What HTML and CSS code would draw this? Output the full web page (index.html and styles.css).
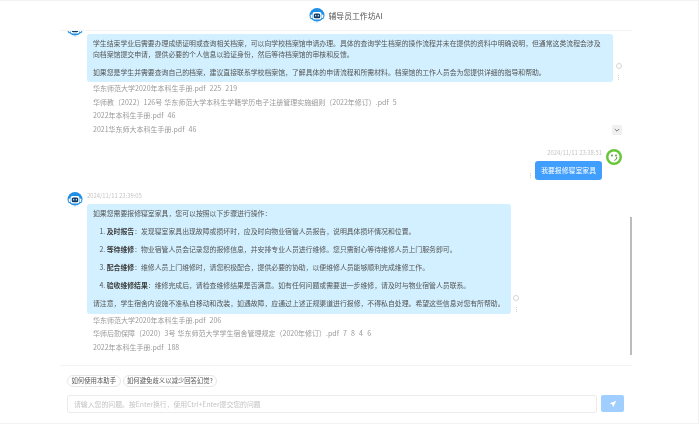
FILE: index.html
```html
<!DOCTYPE html>
<html lang="zh">
<head>
<meta charset="utf-8">
<title>辅导员工作坊AI</title>
<link rel="stylesheet" href="styles.css">
</head>
<body>
<svg class="defs" width="0" height="0" aria-hidden="true">
  <symbol id="bot" viewBox="0 0 32 32">
    <circle cx="16" cy="15" r="15" fill="#1f8fe6"/>
    <path d="M3 21 Q16 33 29 21 L29 27 Q16 34 3 27Z" fill="#fff"/>
    <rect x="3.5" y="13" width="3" height="7" rx="1.5" fill="#fff"/>
    <rect x="25.5" y="13" width="3" height="7" rx="1.5" fill="#fff"/>
    <rect x="7" y="8" width="18" height="15" rx="4" fill="#fff"/>
    <rect x="9.5" y="11" width="13" height="9.5" rx="3" fill="#17395f"/>
    <rect x="12" y="13.5" width="2.6" height="3.6" rx="1" fill="#9fdcff"/>
    <rect x="17.4" y="13.5" width="2.6" height="3.6" rx="1" fill="#9fdcff"/>
    <circle cx="16" cy="28.5" r="1.2" fill="#8cc9f5"/>
  </symbol>
  <symbol id="smile" viewBox="0 0 32 32">
    <circle cx="16" cy="16" r="13.5" fill="#fff" stroke="#67c73a" stroke-width="5"/>
    <circle cx="12" cy="13" r="1.8" fill="#4f8f35"/>
    <circle cx="20" cy="13" r="1.8" fill="#4f8f35"/>
    <path d="M21.5 16 Q22 21.5 16.5 23" fill="none" stroke="#4f8f35" stroke-width="1.8"/>
  </symbol>
</svg>
<div class="page">
  <main class="app">
    <header class="top">
      <svg class="logo"><use href="#bot"/></svg>
      <h1 class="title">辅导员工作坊AI</h1>
    </header>

    <section class="messages">
      <div class="scroller">
        <article class="msg">
          <svg class="avatar"><use href="#bot"/></svg>
          <div class="content">
            <div class="stamp"></div>
            <div class="bubble-row">
              <div class="bubble wide">
                <p>学生结束学业后需要办理成绩证明或查询相关档案，可以向学校档案馆申请办理。具体的查询学生档案的操作流程并未在提供的资料中明确说明，但通常这类流程会涉及向档案馆提交申请，提供必要的个人信息以验证身份，然后等待档案馆的审核和反馈。</p>
                <p>如果您是学生并需要查询自己的档案，建议直接联系学校档案馆，了解具体的申请流程和所需材料。档案馆的工作人员会为您提供详细的指导和帮助。</p>
              </div>
              <div class="actions"><span class="ring"></span><span class="dots"></span></div>
            </div>
            <div class="refs-row">
              <ul class="refs">
                <li>华东师范大学2020年本科生手册.pdf&nbsp; 225&nbsp; 219</li>
                <li>华师教〔2022〕126号 华东师范大学本科生学籍学历电子注册管理实施细则（2022年修订）.pdf&nbsp; 5</li>
                <li>2022年本科生手册.pdf&nbsp; 46</li>
                <li>2021华东师大本科生手册.pdf&nbsp; 46</li>
              </ul>
              <button class="chevron" type="button" aria-label="收起">
                <svg viewBox="0 0 10 10"><path d="M2.8 4 L5 6.2 L7.2 4" fill="none" stroke="#777" stroke-width="1"/></svg>
              </button>
            </div>
          </div>
        </article>

        <article class="msg user">
          <svg class="avatar"><use href="#smile"/></svg>
          <div class="content">
            <div class="stamp">2024/11/11 23:38:51</div>
            <div class="bubble-row">
              <span class="dots"></span>
              <div class="bubble blue">我要报修寝室家具</div>
            </div>
          </div>
        </article>

        <article class="msg">
          <svg class="avatar"><use href="#bot"/></svg>
          <div class="content">
            <div class="stamp">2024/11/11 23:39:05</div>
            <div class="bubble-row">
              <div class="bubble">
                <p>如果您需要报修寝室家具，您可以按照以下步骤进行操作：</p>
                <ol>
                  <li><strong>及时报告</strong>：发现寝室家具出现故障或损坏时，应及时向物业宿管人员报告，说明具体损坏情况和位置。</li>
                  <li><strong>等待维修</strong>：物业宿管人员会记录您的报修信息，并安排专业人员进行维修。您只需耐心等待维修人员上门服务即可。</li>
                  <li><strong>配合维修</strong>：维修人员上门维修时，请您积极配合，提供必要的协助，以便维修人员能够顺利完成维修工作。</li>
                  <li><strong>验收维修结果</strong>：维修完成后，请检查维修结果是否满意。如有任何问题或需要进一步维修，请及时与物业宿管人员联系。</li>
                </ol>
                <p>请注意，学生宿舍内设施不准私自移动和改装，如遇故障，应通过上述正规渠道进行报修，不得私自处理。希望这些信息对您有所帮助。</p>
              </div>
              <div class="actions"><span class="ring"></span><span class="dots"></span></div>
            </div>
            <div class="refs-row">
              <ul class="refs">
                <li>华东师范大学2020年本科生手册.pdf&nbsp; 206</li>
                <li>华师后勤保障〔2020〕3号 华东师范大学学生宿舍管理规定（2020年修订）.pdf&nbsp; 7&nbsp; 8&nbsp; 4&nbsp; 6</li>
                <li>2022年本科生手册.pdf&nbsp; 188</li>
              </ul>
            </div>
          </div>
        </article>
      </div>
      <div class="scrollbar"></div>
    </section>

    <footer class="composer">
      <div class="chips">
        <button class="chip" type="button">如何使用本助手</button>
        <button class="chip" type="button">如何避免歧义以减少回答幻觉?</button>
      </div>
      <div class="input-row">
        <div class="input">请输入您的问题。按Enter换行，使用Ctrl+Enter提交您的问题</div>
        <button class="send" type="button" aria-label="发送">
          <svg viewBox="0 0 12 12"><path d="M11 1 L1 5 L4.8 6.6 L6.4 11Z" fill="#fff"/></svg>
        </button>
      </div>
    </footer>
  </main>
</div>
</body>
</html>
```

FILE: styles.css
```css
* { box-sizing: border-box; }

html, body {
  margin: 0;
  height: 424px;
  overflow: hidden;
  background: #fff;
}

body {
  font-family: "Noto Sans CJK SC", "Noto Sans", sans-serif;
  font-size: 6.86px;
  color: #555;
}

.defs { position: absolute; }

.page {
  width: 699px;
  height: 424px;
  padding-left: 60px;
  border-top: 1px solid #f2f2f2;
  border-right: 1px solid #f2f2f2;
  border-bottom: 1px solid #f2f2f2;
  filter: blur(0.4px);
}

.app {
  width: 572px;
  height: 100%;
  display: flex;
  flex-direction: column;
}

.top {
  flex: none;
  height: 30px;
  display: flex;
  align-items: center;
  justify-content: center;
  gap: 3px;
  border-bottom: 1px solid #f3f3f3;
}

.logo { width: 16px; height: 16px; }

.title {
  margin: 0;
  font-size: 7.84px;
  font-weight: 400;
  color: #555;
}

.messages {
  position: relative;
  flex: none;
  height: 334px;
  overflow: hidden;
}

.scroller {
  margin-top: -9px;
  padding: 0 10px 0 7px;
  display: flex;
  flex-direction: column;
  gap: 12.5px;
}

.msg {
  display: flex;
  gap: 4px;
}

.msg.user { flex-direction: row-reverse; }

.avatar {
  flex: none;
  width: 16px;
  height: 16px;
}

.content {
  flex: 1;
  min-width: 0;
}

.stamp {
  height: 12px;
  font-size: 5.88px;
  line-height: 8px;
  color: #c4c4c4;
}

.user .stamp { text-align: right; }

.bubble-row {
  display: flex;
  align-items: flex-end;
  gap: 2px;
}

.user .bubble-row {
  justify-content: flex-end;
  gap: 4px;
}

.bubble {
  padding: 4px 6px 2px;
  border-radius: 3px;
  background: #d2f0ff;
  line-height: 10.7px;
  color: #555;
}

.bubble.wide { width: 526px; }

.bubble.blue {
  padding: 4px 6px;
  background: #409eff;
  color: #fff;
  line-height: 11px;
}

.bubble p { margin: 0 0 7.3px; }
.bubble p:last-child { margin-bottom: 2.6px; }

.bubble ol {
  margin: 0;
  padding-left: 13.7px;
  list-style: decimal;
}

.bubble li { margin-bottom: 7.3px; }
.bubble strong { font-weight: 700; color: #3c3c3c; }

.actions {
  display: flex;
  flex-direction: column;
  align-items: center;
  gap: 6px;
  margin-left: 0.5px;
  padding-bottom: 2px;
}

.ring {
  width: 6px;
  height: 6px;
  border: 0.7px solid #d4d4d4;
  border-radius: 50%;
}

.dots {
  width: 1px;
  height: 5px;
  background: repeating-linear-gradient(#d0d0d0 0 1px, transparent 1px 2px);
}

.user .dots { margin-bottom: 2px; }

.refs-row {
  display: flex;
  align-items: flex-end;
  justify-content: space-between;
  padding-left: 6px;
}

.refs {
  margin: 0;
  padding: 0;
  list-style: none;
  font-size: 7px;
  word-spacing: 0.5px;
  line-height: 13.6px;
  color: #999;
}

.chevron {
  width: 10px;
  height: 10px;
  margin-bottom: 1px;
  padding: 0;
  border: 0;
  border-radius: 1px;
  background: #f0f0f0;
}

.chevron svg { display: block; width: 10px; height: 10px; }

.scrollbar {
  position: absolute;
  top: 186px;
  right: 0;
  width: 2px;
  height: 138px;
  background: #bcbcbc;
}

.composer {
  flex: 1;
  border-top: 1px solid #f3f3f3;
  padding: 9px 8px 0 7px;
}

.chips {
  display: flex;
  gap: 2px;
  height: 12px;
}

.chip {
  height: 12px;
  padding: 0 3.5px;
  border: 0.7px solid #e6e6e6;
  border-radius: 6px;
  background: #fff;
  font: inherit;
  font-size: 6.37px;
  line-height: 10px;
  color: #555;
}

.input-row {
  display: flex;
  gap: 4px;
  margin-top: 8px;
}

.input {
  width: 531px;
  height: 18px;
  padding-left: 6px;
  border: 0.7px solid #ececec;
  border-radius: 2px;
  line-height: 16.5px;
  color: #c4c4c4;
}

.send {
  width: 23px;
  height: 17px;
  padding: 0;
  display: flex;
  align-items: center;
  justify-content: center;
  border: 0;
  border-radius: 2px;
  background: #a0cfff;
}

.send svg { width: 8px; height: 8px; }
```
